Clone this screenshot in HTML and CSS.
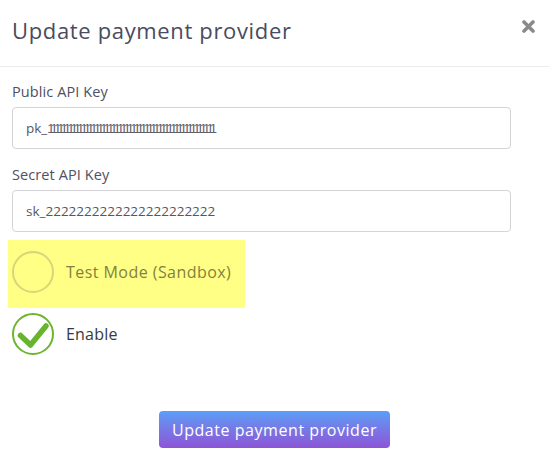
FILE: index.html
```html
<!DOCTYPE html>
<html lang="en">
<head>
<meta charset="utf-8">
<title>Update payment provider</title>
<link rel="stylesheet" href="styles.css">
</head>
<body>
<div class="modal">
  <header class="modal-header">
    <h1 class="modal-title">Update payment provider</h1>
    <button class="close" type="button" aria-label="Close">
      <svg width="13" height="13" viewBox="0 0 13 13"><path d="M2 2 L11 11 M11 2 L2 11" stroke="#8a8a8a" stroke-width="3.6" stroke-linecap="round"/></svg>
    </button>
  </header>
  <form class="modal-body">
    <label class="field-label" id="pub-label">Public API Key</label>
    <div class="field-input" role="textbox" aria-labelledby="pub-label"><span>pk_</span><span class="ones">11111111111111111111111111111111111111111111111111</span></div>
    <label class="field-label second" id="sec-label">Secret API Key</label>
    <div class="field-input" role="textbox" aria-labelledby="sec-label"><span>sk_2222222222222222222222</span></div>
    <div class="highlight">
      <div class="check-row">
        <span class="circle empty"></span>
        <span class="check-text test">Test Mode (Sandbox)</span>
      </div>
    </div>
    <div class="check-row enable-row">
      <span class="circle checked">
        <svg width="42" height="42" viewBox="0 0 42 42"><path d="M8.5 22.5 L18.5 32 L34 13" fill="none" stroke="#67b52e" stroke-width="5.5" stroke-linecap="round" stroke-linejoin="round"/></svg>
      </span>
      <span class="check-text">Enable</span>
    </div>
  </form>
  <div class="modal-footer">
    <button class="submit" type="button">Update payment provider</button>
  </div>
</div>
</body>
</html>
```
FILE: styles.css
```css
* { box-sizing: border-box; }
html, body { margin: 0; padding: 0; background: #fff; }
body { font-family: "Open Sans", "Noto Sans", sans-serif; }

.modal { width: 549px; }

.modal-header {
  display: flex;
  align-items: flex-start;
  justify-content: space-between;
  height: 67px;
  padding: 12px 14px 0 12px;
  border-bottom: 1px solid #e9ecef;
}
.modal-title {
  margin: 0;
  font-size: 22px;
  font-weight: 400;
  line-height: 36px;
  color: #4a4b5e;
  letter-spacing: 0.65px;
}
.close {
  margin-top: 8px;
  padding: 0;
  border: 0;
  background: none;
  width: 13px;
  height: 13px;
  display: block;
}
.close svg { display: block; }

.modal-body {
  display: flex;
  flex-direction: column;
  align-items: flex-start;
  padding: 15px 38px 0 12px;
  margin: 0;
}
.field-label {
  font-size: 14.5px;
  line-height: 20px;
  color: #4f5060;
  margin-bottom: 5px;
  letter-spacing: 0.1px;
}
.field-label.second { margin-top: 16px; }
.field-input {
  width: 499px;
  height: 42px;
  border: 1px solid #d4d4d8;
  border-radius: 4px;
  padding: 0 13px;
  display: flex;
  align-items: center;
  font-family: "Open Sans", sans-serif;
  font-size: 13.5px;
  color: #55565f;
  background: #fff;
  white-space: nowrap;
  overflow: hidden;
}
.field-input .ones {
  font-family: "Liberation Sans", sans-serif;
  font-size: 13px;
  letter-spacing: -2.95px;
  color: #5f6068;
}
.highlight {
  margin: 8px 0 0 -4px;
  width: 237px;
  height: 68px;
  padding: 11px 4px 0;
  background: #ffff85;
}
.check-row {
  display: flex;
  align-items: center;
  gap: 12px;
}
.circle {
  width: 42px;
  height: 42px;
  border-radius: 50%;
  flex: none;
  display: block;
}
.circle.empty { border: 2px solid #d6d67a; }
.circle.checked { border: 2px solid #6cb52f; position: relative; }
.circle.checked svg { position: absolute; left: -2px; top: -2px; }
.check-text {
  font-size: 16px;
  color: #38393f;
  letter-spacing: 0.2px;
}
.check-text.test { color: #82823c; letter-spacing: 0.45px; }
.enable-row { margin-top: 5px; }

.modal-footer {
  display: flex;
  justify-content: center;
  padding-top: 56px;
}
.submit {
  width: 231px;
  height: 37px;
  border: 0;
  border-radius: 4px;
  background: linear-gradient(180deg, #5c9ff8 0%, #7a74e4 55%, #8c55d6 100%);
  color: #fff;
  font-family: "Open Sans", sans-serif;
  font-size: 16px;
  letter-spacing: 0.55px;
  padding: 0;
}
```
